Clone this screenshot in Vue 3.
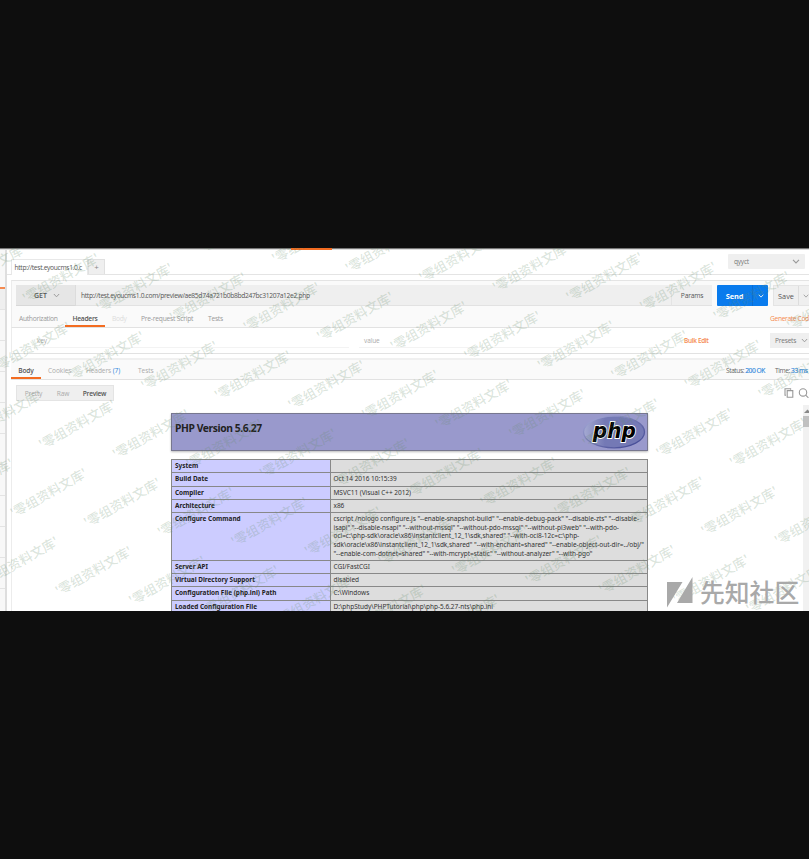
<script setup>
const sideRows = Array.from({ length: 12 }, (_, i) => i)

const info = [
  ['System', ['\u00a0']],
  ['Build Date', ['Oct 14 2016 10:15:39']],
  ['Compiler', ['MSVC11 (Visual C++ 2012)']],
  ['Architecture', ['x86']],
  ['Configure Command', [
    'cscript /nologo configure.js "--enable-snapshot-build" "--enable-debug-pack" "--disable-zts" "--disable-',
    'isapi" "--disable-nsapi" "--without-mssql" "--without-pdo-mssql" "--without-pi3web" "--with-pdo-',
    'oci=c:\\php-sdk\\oracle\\x86\\instantclient_12_1\\sdk,shared" "--with-oci8-12c=c:\\php-',
    'sdk\\oracle\\x86\\instantclient_12_1\\sdk,shared" "--with-enchant=shared" "--enable-object-out-dir=../obj/"',
    '"--enable-com-dotnet=shared" "--with-mcrypt=static" "--without-analyzer" "--with-pgo"',
  ]],
  ['Server API', ['CGI/FastCGI']],
  ['Virtual Directory Support', ['disabled']],
  ['Configuration File (php.ini) Path', ['C:\\Windows']],
  ['Loaded Configuration File', ['D:\\phpStudy\\PHPTutorial\\php\\php-5.6.27-nts\\php.ini']],
]

// Watermark lattice: two step vectors from one origin, relative to the window.
const marks = []
for (let n = -3; n <= 6; n++) {
  for (let m = -4; m <= 14; m++) {
    const x = 99.5 + m * 73.58 - n * 28.6
    const y = 65 + m * 9.6 + n * 68.4
    if (x > -70 && x < 805 && y > 4 && y < 400) marks.push(`translate(${x.toFixed(1)} ${y.toFixed(1)}) rotate(-29.5)`)
  }
}
</script>

<template>
  <div class="screen">
    <div class="shot">
      <div class="topline"><i></i></div>
      <div class="window">
        <aside class="side">
          <div v-for="r in sideRows" :key="r" class="srow" :class="{ first: r === 0, active: r === 1 }"></div>
        </aside>
        <main class="main">
          <header class="tabs">
            <div class="tab">http://test.eyoucms1.0.c</div>
            <div class="plus">+</div>
            <div class="env"><span>qyyct</span>
              <svg width="8" height="5" viewBox="0 0 8 5"><path d="M1 .8 4 4 7 .8" /></svg>
            </div>
          </header>
          <section class="request">
            <div class="urlbar">
              <div class="method"><b>GET</b><svg width="7" height="5" viewBox="0 0 8 5"><path d="M1 .8 4 4 7 .8" /></svg></div>
              <div class="url">http://test.eyoucms1.0.com/preview/ae85d74a721b0b8bd247bc31207a12e2.php</div>
              <div class="params">Params</div>
              <div class="send"><b>Send</b><span class="drop"><svg width="6" height="4" viewBox="0 0 8 5"><path d="M1 .8 4 4 7 .8" /></svg></span></div>
              <div class="save"><span class="stext">Save</span><span class="drop"><svg width="6" height="4" viewBox="0 0 8 5"><path d="M1 .8 4 4 7 .8" /></svg></span></div>
            </div>
            <nav class="rtabs">
              <span class="auth">Authorization</span>
              <span class="on">Headers</span>
              <span class="dim">Body</span>
              <span class="pre">Pre-request Script</span>
              <span class="tst">Tests</span>
              <span class="gen">Generate Cod</span>
            </nav>
          </section>
          <section class="kv">
            <div class="key">key</div>
            <div class="value">value</div>
            <div class="bulk">Bulk Edit</div>
            <div class="presets">Presets<svg width="7" height="5" viewBox="0 0 8 5"><path d="M1 .8 4 4 7 .8" /></svg></div>
          </section>
          <section class="resp">
            <span class="on">Body</span>
            <span class="cookies">Cookies</span>
            <span class="hd">Headers <em>(7)</em></span>
            <span class="rt">Tests</span>
            <span class="status">Status: <em>200 OK</em></span>
            <span class="time">Time: <em>33 ms</em></span>
          </section>
          <section class="modes">
            <div class="seg"><span>Pretty</span><span>Raw</span><b>Preview</b></div>
            <div class="tools">
              <svg width="10" height="10" viewBox="0 0 10 10"><path d="M3.2 2.6h5.6v6.6H3.2zM2 7.2H1V.8h5.6v1" /></svg>
              <svg width="12" height="10" viewBox="0 0 12 10"><circle cx="5" cy="4.4" r="3.7" /><path d="M7.7 7.2 10.4 9.8" /></svg>
            </div>
          </section>
          <section class="preview">
            <div class="page">
              <div class="banner">
                <h1>PHP Version 5.6.27</h1>
                <svg class="php" width="64" height="34" viewBox="0 0 64 34">
                  <defs>
                    <linearGradient id="pg" x1="0" y1="0" x2="1" y2="0">
                      <stop offset="0" stop-color="#a5aad2" /><stop offset=".35" stop-color="#7479b5" /><stop offset="1" stop-color="#7479b5" />
                    </linearGradient>
                    <linearGradient id="pr" x1="0" y1="0" x2="1" y2="1">
                      <stop offset="0" stop-color="#a9addb" /><stop offset=".5" stop-color="#7074b0" /><stop offset="1" stop-color="#3a4190" />
                    </linearGradient>
                  </defs>
                  <ellipse cx="32" cy="17" rx="30.5" ry="15.8" fill="url(#pg)" stroke="url(#pr)" stroke-width="1.3" />
                  <text x="10.8" y="22.6" textLength="43" lengthAdjust="spacingAndGlyphs">php</text>
                </svg>
              </div>
              <div class="table">
                <div v-for="row in info" :key="row[0]" class="row">
                  <div class="name">{{ row[0] }}</div>
                  <div class="val"><div v-for="l in row[1]" :key="l">{{ l }}</div></div>
                </div>
              </div>
            </div>
            <div class="scroll">
              <svg width="6" height="4" viewBox="0 0 6 4"><path d="M1 4 4.5 .6 6 2V4z" /></svg>
              <div class="thumb"></div>
            </div>
          </section>
        </main>
      </div>
      <svg class="marks" width="809" height="363" viewBox="0 0 809 363">
        <text v-for="t in marks" :key="t" :transform="t">'零组资料文库'</text>
      </svg>
      <div class="logo">
        <svg width="26" height="31" viewBox="0 0 26 31"><path d="M0 5H15.5L0 30.5zM25.5 0V26H10z" /></svg>
        <span>先知社区</span>
      </div>
    </div>
  </div>
</template>

<style>
body { background: #0e0e0e; }
</style>

<style scoped>
* { box-sizing: border-box; }
.screen { width: 809px; height: 859px; padding-top: 248px; background: #0e0e0e; overflow: hidden; font: 6.7px/10px "Open Sans", sans-serif; color: #555; }
.shot { position: relative; width: 809px; height: 363px; background: #fff; overflow: hidden; white-space: nowrap; }
.topline { height: 2px; background: linear-gradient(#777 50%, #dcdcdc 50%); padding-left: 291px; }
.topline i { display: block; width: 41px; height: 1.5px; background: #f36c21; }
.window { display: flex; height: 361px; }
.side { width: 7px; flex: none; background: #f8f8f8; border-right: 2px solid #dedede; }
.srow { height: 31px; border-bottom: 1px solid #e4e4e4; }
.srow.first { height: 39px; border-bottom: 2px solid #f58b51; }
.srow.active { height: 21px; background: #efefef; }
.main { flex: none; width: 802px; display: flex; flex-direction: column; }
svg { flex: none; }
svg path, svg circle { fill: none; stroke: #999; stroke-width: 1.1; }
.tabs { height: 25px; display: flex; border-bottom: 1px solid #e4e4e4; align-items: flex-end; flex: none; }
.tab { width: 77px; height: 16px; margin: 0 0 -1px 4px; padding-left: 2.5px; border: 1px solid #e8e8e8; border-bottom: 0; background: #fff; line-height: 16px; letter-spacing: -.33px; }
.plus { width: 17px; height: 15px; background: #efefef; border: 1px solid #e0e0e0; border-bottom: 0; text-align: center; line-height: 13px; color: #888; font-size: 8px; }
.env { margin: 0 4px 5px auto; width: 77px; height: 15px; background: #efefef; border-radius: 1px; display: flex; align-items: center; justify-content: space-between; padding: 0 5px 0 6px; color: #777; font-size: 6.6px; letter-spacing: -.25px; }
.request { margin: 5px 0 0 4px; flex: none; height: 48px; border-top: 1px solid #e4e4e4; border-left: 1px solid #ececec; border-bottom: 1px solid #e2e2e2; background: #fafafa; }
.urlbar { display: flex; height: 21px; margin: 4px 0 0 4px; line-height: 22px; }
.method { width: 60px; background: #e6e6e6; border-right: 1px solid #dcdcdc; display: flex; align-items: center; gap: 6px; padding-left: 18px; flex: none; border-bottom: 1px solid #d8d8d8; line-height: 21px; }
.method b { font-weight: 600; font-size: 7px; padding-top: 1px; }
.url { width: 595px; background: #efefef; padding-left: 5px; flex: none; border-bottom: 1px solid #e2e2e2; letter-spacing: -.325px; }
.params { width: 41px; background: #efefef; border-left: 1px solid #e4e4e4; border-bottom: 1px solid #e2e2e2; text-align: center; flex: none; font-size: 6.7px; letter-spacing: -.2px; }
.send { width: 51px; margin-left: 5px; background: #097bed; color: #fff; display: flex; border-radius: 1px; flex: none; }
.send b { width: 35px; text-align: center; font-weight: 700; font-size: 7.4px; letter-spacing: -.1px; }
.drop { flex: 1; display: flex; align-items: center; justify-content: center; border-left: 1px solid #0a6dd2; }
.send path { stroke: #fff; }
.save { width: 36px; margin-left: 5px; background: #efefef; border: 1px solid #e4e4e4; border-right: 0; display: flex; flex: none; line-height: 20px; font-size: 7.3px; overflow: hidden; }
.stext { width: 24px; text-align: center; flex: none; }
.save .drop { border-color: #ddd; flex: none; width: 14px; }
.rtabs { display: flex; height: 21px; padding-left: 7px; line-height: 25px; color: #999; letter-spacing: -.28px; }
.rtabs span { flex: none; height: 21px; }
.auth { width: 46px; }
.rtabs .on { width: 40px; border-bottom: 2px solid #f36c21; text-align: center; color: #555; font-weight: 600; letter-spacing: -.25px; }
.dim { width: 36px; color: #ddd; padding-left: 7px; }
.pre { width: 67px; letter-spacing: -.22px; }
.tst { width: 20px; }
.rtabs .gen { margin-left: 542px; color: #f58b51; font-size: 6.7px; letter-spacing: -.36px; }
.kv { margin: 0 0 0 4px; height: 26px; display: flex; border-bottom: 1px solid #e2e2e2; border-left: 1px solid #ececec; color: #aaa; line-height: 26px; flex: none; }
.kv > div { flex: none; }
.key { width: 324px; margin-left: 13px; height: 20px; border-bottom: 1px solid #f3f3f3; padding-left: 12px; font-size: 6.5px; letter-spacing: -.2px; }
.value { width: 304px; margin-left: 10px; height: 20px; border-bottom: 1px solid #f3f3f3; padding-left: 5px; font-size: 6.5px; letter-spacing: -.1px; }
.bulk { margin-left: 21px; width: 86px; color: #f58b51; font-weight: 600; font-size: 6.5px; letter-spacing: -.35px; }
.kv .presets { background: #efefef; height: 15px; margin-top: 5px; width: 39px; padding-left: 5px; line-height: 15px; display: flex; align-items: center; gap: 5px; color: #777; font-size: 6.6px; letter-spacing: -.22px; }
.resp { margin: 4px 0 0 4px; height: 22px; background: #fafafa; border-top: 2px solid #f0f0f0; border-bottom: 1px solid #e2e2e2; display: flex; line-height: 22px; color: #aaa; flex: none; font-size: 6.6px; letter-spacing: -.1px; }
.resp span { flex: none; height: 19px; }
.resp .on { width: 30px; text-align: center; border-bottom: 2px solid #f36c21; color: #555; font-weight: 600; }
.resp em { font-style: normal; color: #2d86dc; }
.cookies { width: 38px; padding-left: 7px; }
.hd { width: 52px; margin-left: 7px; }
.rt { width: 20px; }
.resp .status { margin-left: 568px; width: 49px; color: #666; font-size: 6.6px; letter-spacing: -.42px; }
.resp .time { color: #666; font-size: 6.6px; letter-spacing: -.42px; }
.resp .status em, .resp .time em { -webkit-text-stroke: .15px #2d86dc; }
.modes { display: flex; height: 25px; padding: 5px 0 0 9px; justify-content: space-between; flex: none; }
.seg { width: 98px; height: 16px; border: 1px solid #e4e4e4; background: #efefef; display: flex; line-height: 15px; color: #aaa; font-size: 6.6px; letter-spacing: -.15px; }
.seg span { width: 33px; text-align: center; }
.seg span + span { width: 26px; }
.seg b { font-weight: 600; color: #555; flex: 1; text-align: center; letter-spacing: -.25px; }
.tools { display: flex; gap: 4px; padding: 3px 0 0; margin-right: -1px; }
.preview { display: flex; height: 206px; margin-left: 4px; border-left: 1px solid #ececec; justify-content: space-between; font-family: "Noto Sans", sans-serif; color: #222; flex: none; }
.page { width: 477px; margin: 8px 0 0 159px; flex: none; }
.banner { height: 38px; background: #9999cc; border: 1px solid #77778f; box-shadow: 0 1px 2px #bbb; display: flex; justify-content: space-between; padding: 0 1px 0 3px; }
h1 { margin: 8px 0 0; font-size: 10.3px; line-height: 12px; font-weight: 700; letter-spacing: -.4px; }
.php { margin-top: 1px; }
.php text { font: italic bold 22px "DejaVu Sans", sans-serif; fill: #000; stroke: #fff; stroke-width: 1.8px; paint-order: stroke; }
.table { margin-top: 8px; border: 1px solid #888; border-top-width: 0; }
.row { display: flex; border-top: 1px solid #888; line-height: 8.65px; font-size: 6.4px; }
.name { width: 158px; background: #ccccff; font-weight: 700; padding: 2px 0 1.6px 3px; flex: none; }
.val { flex: 1; background: #ddd; border-left: 1px solid #888; padding: 2px 0 1.6px 2.5px; color: #333; font-size: 6.5px; letter-spacing: -.03px; }
.scroll { width: 6px; background: #f1f1f1; padding-top: 4px; display: flex; flex-direction: column; }
.scroll path { fill: #888; stroke: none; }
.thumb { height: 11px; background: #c1c1c1; margin-top: 3px; }
.marks { position: absolute; inset: 0; }
.marks text { font: 500 13px "Noto Sans CJK SC", sans-serif; fill: rgba(100, 140, 105, .23); }
.logo { position: absolute; left: 667px; top: 329px; display: flex; color: #a9a9a9; gap: 7px; }
.logo path { fill: #a9a9a9; stroke: none; }
.logo span { font: 500 24.8px/28px "Noto Sans CJK SC", sans-serif; }
</style>
